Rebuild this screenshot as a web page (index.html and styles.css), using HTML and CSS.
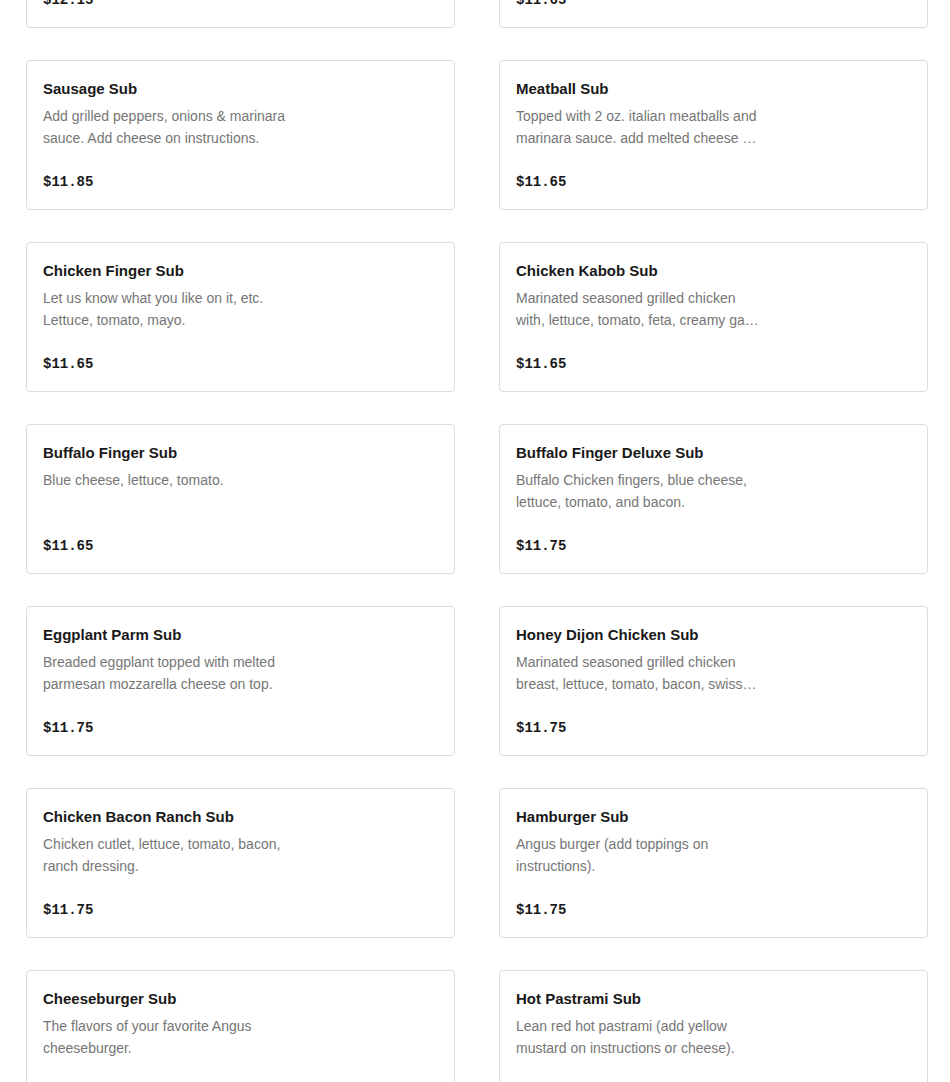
FILE: index.html
```html
<!DOCTYPE html>
<html lang="en">
<head>
<meta charset="utf-8">
<title>Subs</title>
<link rel="stylesheet" href="styles.css">
</head>
<body>
<main class="menu">
  <div class="grid">
    <div class="card"><h3 class="title">Steak &amp; Cheese Sub</h3><p class="desc">Shaved steak with melted cheese, grilled onions and peppers.</p><div class="price">$12.15</div></div>
    <div class="card"><h3 class="title">Italian Sub</h3><p class="desc">Ham, salami, provolone, lettuce, tomato, onions and oil.</p><div class="price">$11.65</div></div>

    <div class="card"><h3 class="title">Sausage Sub</h3><p class="desc">Add grilled peppers, onions &amp; marinara sauce. Add cheese on instructions.</p><div class="price">$11.85</div></div>
    <div class="card"><h3 class="title">Meatball Sub</h3><p class="desc">Topped with 2 oz. italian meatballs and marinara sauce. add melted cheese on instructions.</p><div class="price">$11.65</div></div>

    <div class="card"><h3 class="title">Chicken Finger Sub</h3><p class="desc">Let us know what you like on it, etc. Lettuce, tomato, mayo.</p><div class="price">$11.65</div></div>
    <div class="card"><h3 class="title">Chicken Kabob Sub</h3><p class="desc">Marinated seasoned grilled chicken with, lettuce, tomato, feta, creamy garlic sauce.</p><div class="price">$11.65</div></div>

    <div class="card"><h3 class="title">Buffalo Finger Sub</h3><p class="desc">Blue cheese, lettuce, tomato.</p><div class="price">$11.65</div></div>
    <div class="card"><h3 class="title">Buffalo Finger Deluxe Sub</h3><p class="desc">Buffalo Chicken fingers, blue cheese, lettuce, tomato, and bacon.</p><div class="price">$11.75</div></div>

    <div class="card"><h3 class="title">Eggplant Parm Sub</h3><p class="desc">Breaded eggplant topped with melted parmesan mozzarella cheese on top.</p><div class="price">$11.75</div></div>
    <div class="card"><h3 class="title">Honey Dijon Chicken Sub</h3><p class="desc">Marinated seasoned grilled chicken breast, lettuce, tomato, bacon, swiss cheese, honey dijon.</p><div class="price">$11.75</div></div>

    <div class="card"><h3 class="title">Chicken Bacon Ranch Sub</h3><p class="desc">Chicken cutlet, lettuce, tomato, bacon, ranch dressing.</p><div class="price">$11.75</div></div>
    <div class="card"><h3 class="title">Hamburger Sub</h3><p class="desc">Angus burger (add toppings on instructions).</p><div class="price">$11.75</div></div>

    <div class="card"><h3 class="title">Cheeseburger Sub</h3><p class="desc">The flavors of your favorite Angus cheeseburger.</p><div class="price">$11.95</div></div>
    <div class="card"><h3 class="title">Hot Pastrami Sub</h3><p class="desc">Lean red hot pastrami (add yellow mustard on instructions or cheese).</p><div class="price">$12.15</div></div>
  </div>
</main>
</body>
</html>
```
FILE: styles.css
```css
html, body {
  margin: 0;
  padding: 0;
  background: #ffffff;
}

body {
  font-family: "Liberation Sans", Arial, sans-serif;
  color: #191919;
  overflow: hidden;
}

.menu {
  padding: 0 22px 0 26px;
}

.grid {
  margin-top: -122px;
  display: grid;
  grid-template-columns: 1fr 1fr;
  column-gap: 44px;
  row-gap: 32px;
}

.card {
  border: 1px solid #dcdcdc;
  border-radius: 4px;
  padding: 16px;
  height: 150px;
  box-sizing: border-box;
  display: flex;
  flex-direction: column;
}

.title {
  margin: 0;
  font-size: 15px;
  font-weight: 700;
  line-height: 24px;
  color: #191919;
}

.desc {
  margin: 4px 0 0;
  max-width: 247px;
  font-size: 14px;
  line-height: 22px;
  height: 44px;
  color: #767676;
  display: -webkit-box;
  -webkit-line-clamp: 2;
  -webkit-box-orient: vertical;
  overflow: hidden;
}

.price {
  margin-top: 23px;
  font-family: "Liberation Mono", "Courier New", monospace;
  font-weight: 700;
  font-size: 14px;
  line-height: 20px;
  color: #191919;
}
```
